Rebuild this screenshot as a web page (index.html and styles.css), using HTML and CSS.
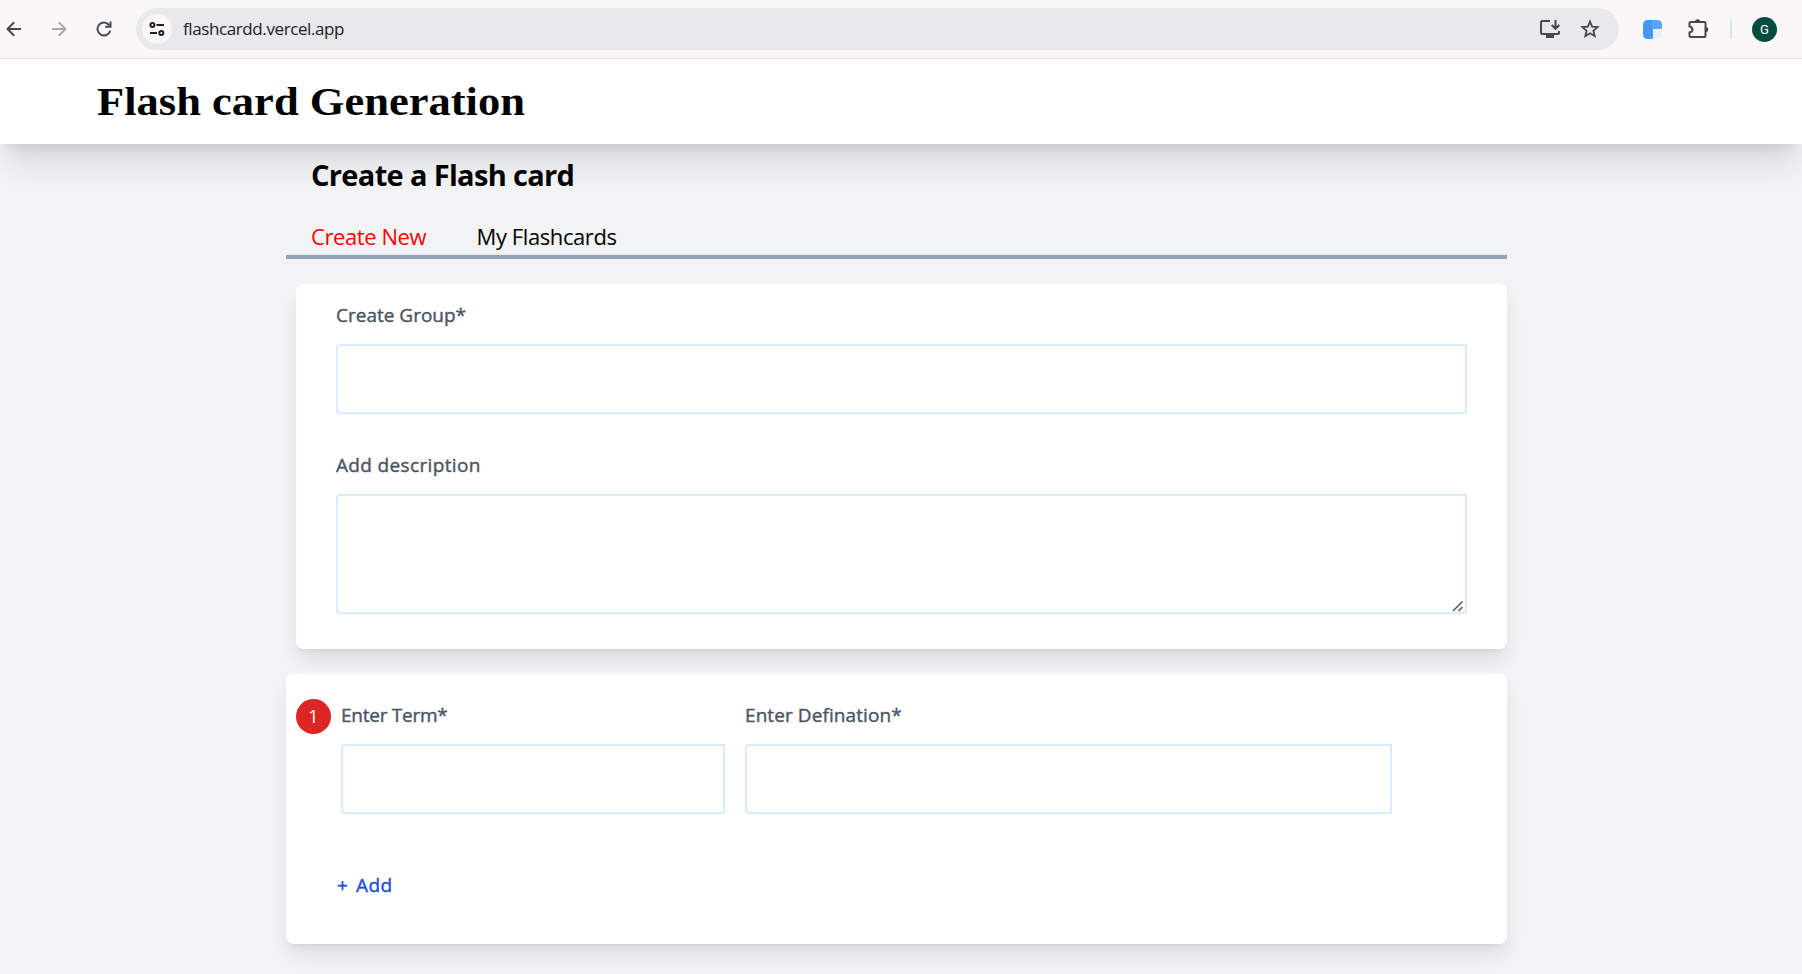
FILE: index.html
```
<!DOCTYPE html>
<html lang="en">
<head>
<meta charset="utf-8">
<title>Flash card Generation</title>
<link rel="stylesheet" href="styles.css">
</head>
<body>
<header class="browser">
  <svg class="nav-icon back" width="16" height="16" viewBox="0 0 16 16"><path d="M15 8H2M8.200 1.300 1.500 8l6.700 6.700"/></svg>
  <svg class="nav-icon forward" width="16" height="16" viewBox="0 0 16 16"><path d="M1 8h13M7.800 1.300 14.500 8l-6.700 6.700"/></svg>
  <svg class="nav-icon reload" width="16" height="16" viewBox="0 0 16 16"><path d="M14.200 9.800A6.500 6.500 0 1 1 13.300 4.200M14.500.5v5.300H9.200"/></svg>
  <div class="omnibox">
    <span class="site-info">
      <svg width="16" height="14" viewBox="0 0 16 14"><circle cx="3.400" cy="3" r="2"/><path d="M7.500 3H15M1 11h7"/><circle cx="12.300" cy="11" r="2"/></svg>
    </span>
    <span class="url">flashcardd.vercel.app</span>
    <svg class="install" width="22" height="20" viewBox="0 0 22 20"><path d="M11 2H3.500Q2 2 2 3.500v10Q2 15 3.500 15h15q1.500 0 1.500-1.500V12M16.500 1v8.500M12.700 6l3.800 3.800L20.300 6"/><path class="solid" d="M7 15h8v4H7z"/></svg>
    <svg class="star" width="20" height="20" viewBox="0 0 20 20"><path d="m10 2.600 2.100 5.100 5.500.4-4.200 3.600 1.300 5.400L10 14.200l-4.700 2.900 1.300-5.400L2.400 8.100l5.500-.4z"/></svg>
  </div>
  <svg class="ext" width="19" height="19" viewBox="0 0 19 19"><path fill="#4597f8" d="M5 0h5v19H5q-5 0-5-5V5q0-5 5-5z"/><path fill="#5aa5fb" d="M9 0h5q5 0 5 5v4H9z"/><path fill="#e5f1ff" d="M10 10h8v4q0 4-4 4h-4z"/></svg>
  <svg class="puzzle" width="22" height="22" viewBox="0 0 22 22"><path d="M3 4h14.500q1 0 1 1v13q0 1-1 1h-14q-1 0-1-1v-3.500q3-.7 3-3t-3-3V5q0-1 1-1z"/><path class="solid" d="M8 4a2.700 2.700 0 0 1 5.400 0zM18.500 8.800a2.700 2.700 0 0 1 0 5.400z"/></svg>
  <span class="separator"></span>
  <span class="avatar">G</span>
</header>
<div class="site-header"><h1 class="brand">Flash card Generation</h1></div>
<main class="content">
  <h2 class="page-title">Create a Flash card</h2>
  <nav class="tabs"><a class="tab active">Create New</a><a class="tab">My Flashcards</a></nav>
  <section class="card group-card">
    <label class="label" for="group">Create Group*</label>
    <input class="field" id="group" type="text">
    <label class="label second" for="desc">Add description</label>
    <div class="area-wrap">
      <textarea class="field area" id="desc"></textarea>
      <svg class="grip" width="12" height="12" viewBox="0 0 12 12"><path d="M1 11 10.500 1.500M6.500 11l4-4"/></svg>
    </div>
  </section>
  <section class="card terms-card">
    <div class="term-row">
      <span class="number">1</span>
      <div class="term"><label class="label" for="term">Enter Term*</label><input class="field" id="term" type="text"></div>
      <div class="definition"><label class="label" for="def">Enter Defination*</label><input class="field" id="def" type="text"></div>
    </div>
    <button class="add" type="button"><span class="plus">+</span><span class="add-text">Add</span></button>
  </section>
</main>
</body>
</html>
```
FILE: styles.css
```
* { box-sizing: border-box; }
body { margin: 0; height: 974px; overflow: hidden; background: #f2f3f5; color: #000; font-family: "Open Sans", "Noto Sans", sans-serif; }
svg { display: block; flex: none; fill: none; }

.browser { display: flex; align-items: center; height: 59px; padding: 0 20px 0 6px; background: #fbf7f9; border-bottom: 1px solid #e3dfe2; }
.nav-icon { stroke: #474a50; stroke-width: 2; }
.forward { margin-left: 29px; stroke: #a9a7aa; }
.reload { margin-left: 29px; }
.omnibox { display: flex; align-items: center; width: 1483px; height: 42px; margin-left: 24px; padding: 0 19px 0 6px; border-radius: 21px; background: #e9e8ed; }
.site-info { display: grid; place-items: center; width: 30px; height: 30px; border-radius: 50%; background: #fbf7f9; }
.site-info svg { stroke: #202124; stroke-width: 2; }
.url { margin-left: 11px; padding-bottom: 1px; color: #202124; font-size: 17px; letter-spacing: -.4px; }
.install { margin-left: auto; stroke: #46474a; stroke-width: 2; }
.star { margin-left: 19px; stroke: #46474a; stroke-width: 1.8; }
.solid { fill: #46474a; stroke: none; }
.ext { margin-left: 24px; }
.puzzle { margin-left: 25px; stroke: #46474a; stroke-width: 2; }
.separator { width: 2px; height: 20px; margin-left: 21px; background: #d3e3fd; }
.avatar { display: grid; place-items: center; width: 25px; height: 25px; margin-left: 20px; border-radius: 50%; background: #004d40; color: #fff; font: 13px Roboto, sans-serif; }

.site-header { height: 85px; padding: 19px 0 0 97px; background: #fff; box-shadow: 0 25px 31.250px -6.250px rgba(0, 0, 0, .1), 0 10px 12.500px -7.500px rgba(0, 0, 0, .1); }
.brand { width: max-content; margin: 0; font: bold 39px/48px "Liberation Serif", serif; transform: scaleX(1.142); transform-origin: left; }

.content { width: 1221px; margin-left: 286px; }
.page-title { margin: 0; padding: 12px 0 1px 25px; font-size: 29px; line-height: 38px; font-weight: 700; letter-spacing: -.66px; }
.tabs { display: flex; gap: 50.500px; height: 64px; padding: 23px 25px 0; border-bottom: 4px solid #94a3b8; box-shadow: inset 0 -1px #e5e7eb; font-size: 22px; line-height: 36px; letter-spacing: -.42px; }
.tab.active { color: #f00; }
.card { border-radius: 7.5px; background: #fff; box-shadow: 0 12.500px 18.750px -3.750px rgba(0, 0, 0, .1), 0 5px 7.500px -5px rgba(0, 0, 0, .1); }
.group-card { display: flex; flex-direction: column; height: 365px; margin: 25px 0 0 10px; padding: 15px 40px 0; }
.label { display: block; height: 45px; color: #4b5563; font-size: 19px; line-height: 32px; -webkit-text-stroke: .4px; }
.label.second { margin-top: 35px; letter-spacing: .35px; }
.term .label { letter-spacing: -.25px; }
.definition .label { letter-spacing: .08px; }
.field { display: block; width: 100%; height: 70px; margin: 0; padding: 0; border: 2px solid #dbeafe; border-radius: 4px 0 0 4px; background: #fff; outline: none; }
.area-wrap { position: relative; }
.area { height: 120px; resize: none; }
.grip { position: absolute; right: 3px; bottom: 2px; stroke: #555; stroke-width: 1.5; }
.terms-card { height: 270px; margin-top: 25px; padding: 25px 10px 0; }
.term-row { display: flex; }
.number { display: grid; place-items: center; width: 35px; height: 35px; padding-bottom: 2px; border-radius: 50%; background: #dc2626; color: #fff; font-size: 18px; }
.term { width: 384px; margin-left: 10px; }
.definition { width: 647px; margin-left: 20px; }
.add { display: flex; margin: 56px 0 0 41px; padding: 0; border: 0; background: none; color: #1d4ed8; font: 19px/30px "Open Sans", sans-serif; -webkit-text-stroke: .4px; }
.add-text { margin-left: 8px; letter-spacing: .5px; }
```
